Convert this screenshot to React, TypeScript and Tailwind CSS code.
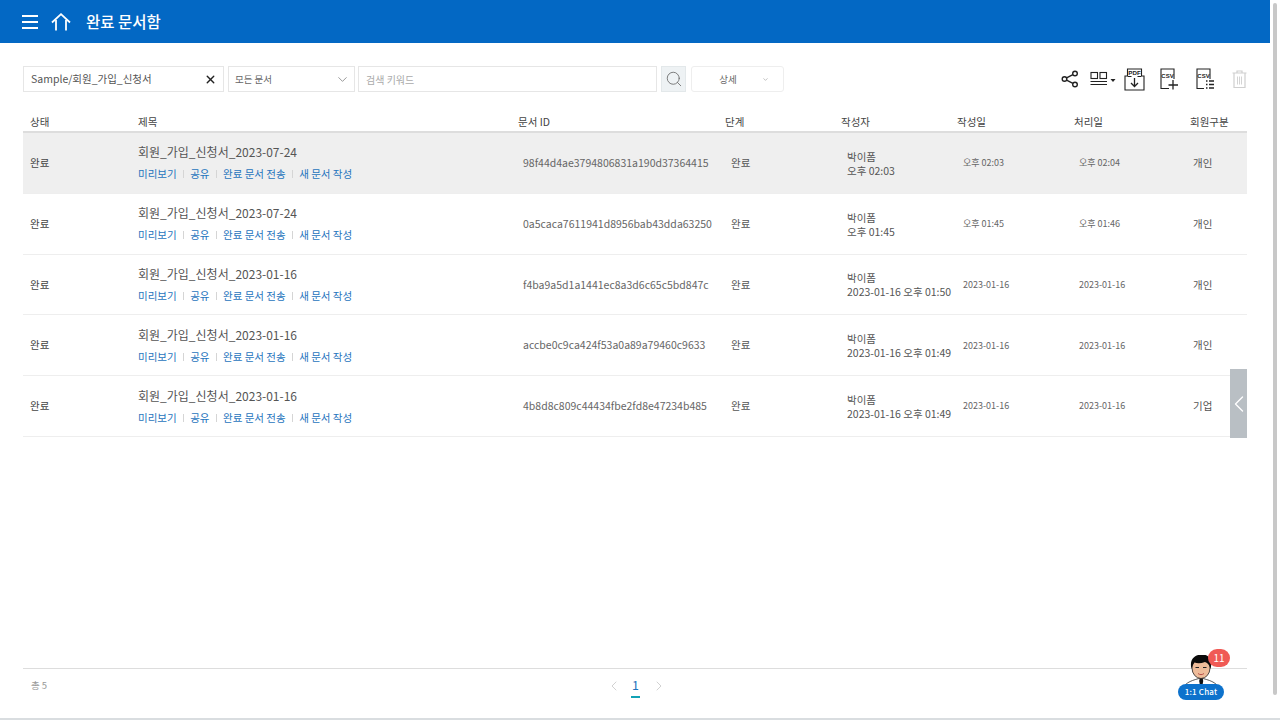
import React from "react";
import { ChevronDown, ChevronLeft, ChevronRight, Search, X } from "lucide-react";

const FONT = "font-['Noto_Sans_CJK_KR','Noto_Sans',sans-serif]";
const COLS = "grid grid-cols-[115px_380px_207px_116px_116px_117px_116px_57px]";

const headers = ["상태", "제목", "문서 ID", "단계", "작성자", "작성일", "처리일", "회원구분"];

const rows = [
  { title: "회원_가입_신청서_2023-07-24", id: "98f44d4ae3794806831a190d37364415", time: "오후 02:03", made: "오후 02:03", done: "오후 02:04", kind: "개인" },
  { title: "회원_가입_신청서_2023-07-24", id: "0a5caca7611941d8956bab43dda63250", time: "오후 01:45", made: "오후 01:45", done: "오후 01:46", kind: "개인" },
  { title: "회원_가입_신청서_2023-01-16", id: "f4ba9a5d1a1441ec8a3d6c65c5bd847c", time: "2023-01-16 오후 01:50", made: "2023-01-16", done: "2023-01-16", kind: "개인" },
  { title: "회원_가입_신청서_2023-01-16", id: "accbe0c9ca424f53a0a89a79460c9633", time: "2023-01-16 오후 01:49", made: "2023-01-16", done: "2023-01-16", kind: "개인" },
  { title: "회원_가입_신청서_2023-01-16", id: "4b8d8c809c44434fbe2fd8e47234b485", time: "2023-01-16 오후 01:49", made: "2023-01-16", done: "2023-01-16", kind: "기업" },
];

const actions = ["미리보기", "공유", "완료 문서 전송", "새 문서 작성"];

const HomeIcon = () => (
  <svg width="20" height="18" viewBox="0 0 20 18" fill="none" stroke="#fff" strokeWidth="1.8">
    <path d="M1 9.5 10 1.2l9 8.3" />
    <path d="M5 7v10.5M15 7v10.5" />
  </svg>
);

const ShareIcon = () => (
  <svg width="18" height="18" viewBox="0 0 18 18" fill="none" stroke="#222" strokeWidth="1.4">
    <circle cx="3.5" cy="9" r="2.3" />
    <circle cx="14" cy="3.500" r="2.3" />
    <circle cx="14" cy="14.500" r="2.3" />
    <path d="M5.6 7.9 11.9 4.600M5.6 10.100l6.300 3.300" />
  </svg>
);

const ColumnsIcon = () => (
  <svg width="27" height="16" viewBox="0 0 27 16" fill="none" stroke="#222" strokeWidth="1.1">
    <rect x="1" y="1.5" width="6.5" height="6" />
    <rect x="10" y="1.5" width="6.5" height="6" />
    <path d="M0.5 10.5h16.5M0.5 13.5h16.5" />
    <path d="M20.5 8h5l-2.5 3z" fill="#222" stroke="none" />
  </svg>
);

const PdfIcon = () => (
  <svg width="21" height="23" viewBox="0 0 21 23" fill="none" stroke="#222" strokeWidth="1.1">
    <path d="M3.5 8V1h14v7" />
    <path d="M3.5 8H1v14h19V8h-2.5" />
    <text x="10.5" y="6.800" fill="#222" stroke="none" fontSize="6.2" fontWeight="700" textAnchor="middle" fontFamily="Liberation Sans">PDF</text>
    <path d="M10.5 10v8M7 15l3.5 3.5L14 15" strokeWidth="1.3" />
    <path d="M3.5 8.5h4M13.5 8.5h4" />
  </svg>
);

const CsvPlusIcon = () => (
  <svg width="19" height="22" viewBox="0 0 19 22" fill="none" stroke="#222" strokeWidth="1.1">
    <path d="M9 20.5H1V1h13v10" />
    <text x="7.5" y="9.5" fill="#222" stroke="none" fontSize="6" fontWeight="700" textAnchor="middle" fontFamily="Liberation Sans">CSV</text>
    <path d="M13 12v9.5M8.5 17h9.5" strokeWidth="1.3" />
  </svg>
);

const CsvListIcon = () => (
  <svg width="19" height="22" viewBox="0 0 19 22" fill="none" stroke="#222" strokeWidth="1.1">
    <path d="M8 20.5H1V1h13v10" />
    <text x="7.5" y="9.5" fill="#222" stroke="none" fontSize="6" fontWeight="700" textAnchor="middle" fontFamily="Liberation Sans">CSV</text>
    <path d="M10 13h1.5M13 13h5M10 16.5h1.5M13 16.5h5M10 20h1.5M13 20h5" strokeWidth="1.3" />
  </svg>
);

const TrashIcon = () => (
  <svg width="15" height="18" viewBox="0 0 15 18" fill="none" stroke="#cfcfcf" strokeWidth="1.2">
    <path d="M0.5 3h14M5 3V1h5v2" />
    <path d="M2 3v14.5h11V3" />
    <path d="M5.5 6.5v8M7.5 6.5v8M9.5 6.5v8" strokeWidth="0.9" />
  </svg>
);

const ChatAvatar = () => (
  <svg width="46" height="34" viewBox="0 0 46 34">
    <path d="M5 33c3-6 10-8 18-10 8 2 15 4 18 10z" fill="#fff" stroke="#333" strokeWidth="0.8" />
    <path d="M22 22h2.500l.7 4-1 6h-2l-1-6z" fill="#111" />
    <ellipse cx="23" cy="13" rx="9" ry="10.500" fill="#eebc9a" stroke="#222" strokeWidth="0.8" />
    <path d="M13.500 14C11 4 17-.5 24-.5s11 5 8.500 14.500c-1-4-2.500-6-5.500-7-4 1.500-8 1.500-10.500.5-1.500 2-2.500 3.500-3 6.500z" fill="#0b0b0b" />
    <path d="M17.500 12.500h3.500M25 12.500h3.500" stroke="#222" strokeWidth="1" />
    <path d="M20 18.500c2 1.500 4 1.500 6 0" stroke="#a33" strokeWidth="0.8" fill="none" />
  </svg>
);

const Toolbar = () => (
  <div className="mt-[23px] flex h-[26px] items-stretch">
    <div className="flex w-[201px] items-center justify-between border border-[#e6e6e6] pl-[7px] pr-[6px] text-[10.500px] text-[#555]">
      <span>Sample/회원_가입_신청서</span>
      <X size={13} strokeWidth={2.5} className="text-[#222]" />
    </div>
    <div className="ml-[4px] flex w-[127px] items-center justify-between border border-[#e6e6e6] pl-[6px] pr-[4px] text-[9.500px] text-[#666]">
      <span>모든 문서</span>
      <ChevronDown size={15} strokeWidth={1.2} className="text-[#777]" />
    </div>
    <div className="ml-[3px] flex w-[299px] items-center border border-[#e6e6e6] pl-[7px] text-[10px] text-[#aaa]">
      검색 키워드
    </div>
    <div className="ml-[4px] flex w-[25px] items-center justify-center border border-[#e3e8ea] bg-[#eef2f4]">
      <Search size={18} strokeWidth={1.1} className="text-[#666]" />
    </div>
    <div className="relative ml-[5px] flex w-[93px] items-center justify-center rounded-[3px] border border-[#eeeeee] text-[9.500px] text-[#666]">
      <span className="mr-[19px]">상세</span>
      <ChevronDown size={7} strokeWidth={1.5} className="absolute right-[14px] text-[#777]" />
    </div>
    <div className="ml-auto flex items-center">
      <ShareIcon />
      <span className="ml-[11px]"><ColumnsIcon /></span>
      <span className="ml-[7px]"><PdfIcon /></span>
      <span className="ml-[15px]"><CsvPlusIcon /></span>
      <span className="ml-[17px]"><CsvListIcon /></span>
      <span className="ml-[17px]"><TrashIcon /></span>
    </div>
  </div>
);

const Row = ({ row, active }: { row: (typeof rows)[number]; active: boolean }) => (
  <div className={`${COLS} h-[60.800px] items-center border-b border-[#eeeeee] text-[#555] ${active ? "bg-[#efefef]" : ""}`}>
    <div className="pl-[7px] text-[10.500px] text-[#444]">완료</div>
    <div>
      <div className="text-[12px] leading-[18px] text-[#555]">{row.title}</div>
      <div className="mt-[5px] flex items-center text-[10.500px] leading-[16px] text-[#1f74bd]">
        {actions.map((a, i) => (
          <React.Fragment key={a}>
            {i > 0 && <span className="mx-[6.250px] h-[8px] w-px bg-[#d5d5d5]" />}
            <span>{a}</span>
          </React.Fragment>
        ))}
      </div>
    </div>
    <div className="pl-[5px] text-[10.500px] text-[#666]">{row.id}</div>
    <div className="pl-[6px] text-[10.500px]">완료</div>
    <div className="mt-[2px] whitespace-nowrap pl-[6px] text-[10.500px] leading-[14px] text-[#555]">
      <div>박이폼</div>
      <div>{row.time}</div>
    </div>
    <div className="pl-[6px] text-[9px] text-[#666]">{row.made}</div>
    <div className="pl-[5px] text-[9px] text-[#666]">{row.done}</div>
    <div className="pl-[3px] text-[10.500px]">{row.kind}</div>
  </div>
);

const App = () => {
  return (
    <div className={`${FONT} relative flex h-[720px] w-[1280px] flex-col overflow-hidden bg-white`}>
      <header className="flex h-[43px] w-[1270px] shrink-0 items-center bg-[#0368c4] pl-[22px] text-white">
        <div className="flex w-[16px] flex-col gap-[4px]">
          <span className="h-[2px] bg-white" />
          <span className="h-[2px] bg-white" />
          <span className="h-[2px] bg-white" />
        </div>
        <span className="ml-[13px]"><HomeIcon /></span>
        <h1 className="ml-[15px] text-[15.500px] font-medium">완료 문서함</h1>
      </header>

      <main className="flex flex-1 flex-col pl-[23px] pr-[33px]">
        <Toolbar />
        <div className={`${COLS} mt-[22px] h-[19px] items-center border-b-2 border-[#dddddd] pb-[2px] text-[10.500px] text-[#444]`}>
          {headers.map((h, i) => (
            <div key={h} className={i === 0 ? "pl-[7px]" : ""}>{h}</div>
          ))}
        </div>
        {rows.map((row, i) => (
          <Row key={row.id} row={row} active={i === 0} />
        ))}

        <footer className="relative mt-auto flex h-[50px] items-start border-t border-[#dddddd]">
          <span className="ml-[8px] mt-[9px] text-[9.500px] text-[#999]">총 5</span>
          <div className="absolute left-[583px] top-[7px] flex items-start text-[#bbb]">
            <ChevronLeft size={16} strokeWidth={1} className="mt-[2px]" />
            <span className="ml-[10px] text-[12.500px] leading-[18px] text-[#1f74bd]">1</span>
            <ChevronRight size={16} strokeWidth={1} className="ml-[12px] mt-[2px]" />
          </div>
          <span className="absolute left-[608px] top-[27px] h-[2px] w-[9px] bg-[#12a2b5]" />
        </footer>
      </main>

      <div className="h-[2px] w-full shrink-0 bg-[#d9dde0]" />

      <div className="absolute left-[1230px] top-[369px] flex h-[69px] w-[17px] items-center justify-center bg-[#b9bfc4]">
        <ChevronLeft size={28} strokeWidth={1.2} className="shrink-0 text-white" />
      </div>

      <div className="absolute left-[1273px] top-[3px] h-[692px] w-[4px] rounded-sm bg-[#c8c8c8]" />

      <div className="absolute left-[1178px] top-[655px] flex w-[46px] flex-col items-center">
        <ChatAvatar />
        <div className="mt-[-5px] h-[16px] w-[46px] rounded-[8px] bg-[#0d72cc] text-center text-[8px] font-medium leading-[16px] tracking-[0.2px] text-white">
          1:1 Chat
        </div>
        <span className="absolute left-[30px] top-[-6px] h-[18px] w-[22px] rounded-full bg-[#f05a55] text-center text-[10px] leading-[18px] text-white">
          11
        </span>
      </div>
    </div>
  );
};

export default App;
